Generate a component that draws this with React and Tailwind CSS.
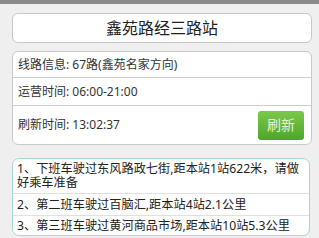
import React from 'react';

const font = { fontFamily: '"Noto Sans", "Noto Sans CJK SC", sans-serif' };

const buses = [
  '1、下班车驶过东风路政七街,距本站1站622米，请做好乘车准备',
  '2、第二班车驶过百脑汇,距本站4站2.1公里',
  '3、第三班车驶过黄河商品市场,距本站10站5.3公里',
];

const App = () => {
  return (
    <div className="w-[319px] h-[238px] bg-[#efefef] overflow-hidden" style={font}>
      {/* top bar */}
      <div className="h-[4px] bg-[#8a8a8a]" />

      {/* station title */}
      <div className="ml-[12px] mt-[9px] w-[300px] h-[30px] bg-white border border-[#c9c9c9] rounded-[6px] flex items-center justify-center">
        <span className="text-[16px] font-normal text-[#222] leading-none">鑫苑路经三路站</span>
      </div>

      {/* info */}
      <div className="ml-[12px] mt-[8px] w-[300px] bg-white border border-[#c9c9c9] rounded-[6px] text-[12px] text-[#333]">
        <div className="h-[26px] flex items-center pl-[5px] border-b border-[#cfcfcf]">线路信息: 67路(鑫苑名家方向)</div>
        <div className="h-[28px] flex items-center pl-[5px] border-b border-[#cfcfcf]">运营时间: 06:00-21:00</div>
        <div className="h-[38px] flex items-center justify-between pl-[5px] pr-[7px]">
          <span>刷新时间: 13:02:37</span>
          <button className="w-[46px] h-[29px] rounded-[3px] bg-gradient-to-b from-[#7bc94a] to-[#4ea52b] text-[#e3f2d6] text-[14px] leading-none">
            刷新
          </button>
        </div>
      </div>

      {/* bus list */}
      <div className="ml-[12px] mt-[13px] w-[298px] bg-white border border-[#a6d8d3] rounded-[7px] text-[12.2px] text-[#222] leading-[14px]">
        {buses.map((b, i) => (
          <div
            key={i}
            className={`pl-[4px] pr-[1px] ${i === 0 ? 'pt-[3px] pb-[3px] border-b' : i === 1 ? 'pt-[4px] pb-[3px] border-b' : 'pt-[3px] pb-[2px]'} border-[#e0e0e0]`}
          >
            {b}
          </div>
        ))}
      </div>
    </div>
  );
};

export default App;
